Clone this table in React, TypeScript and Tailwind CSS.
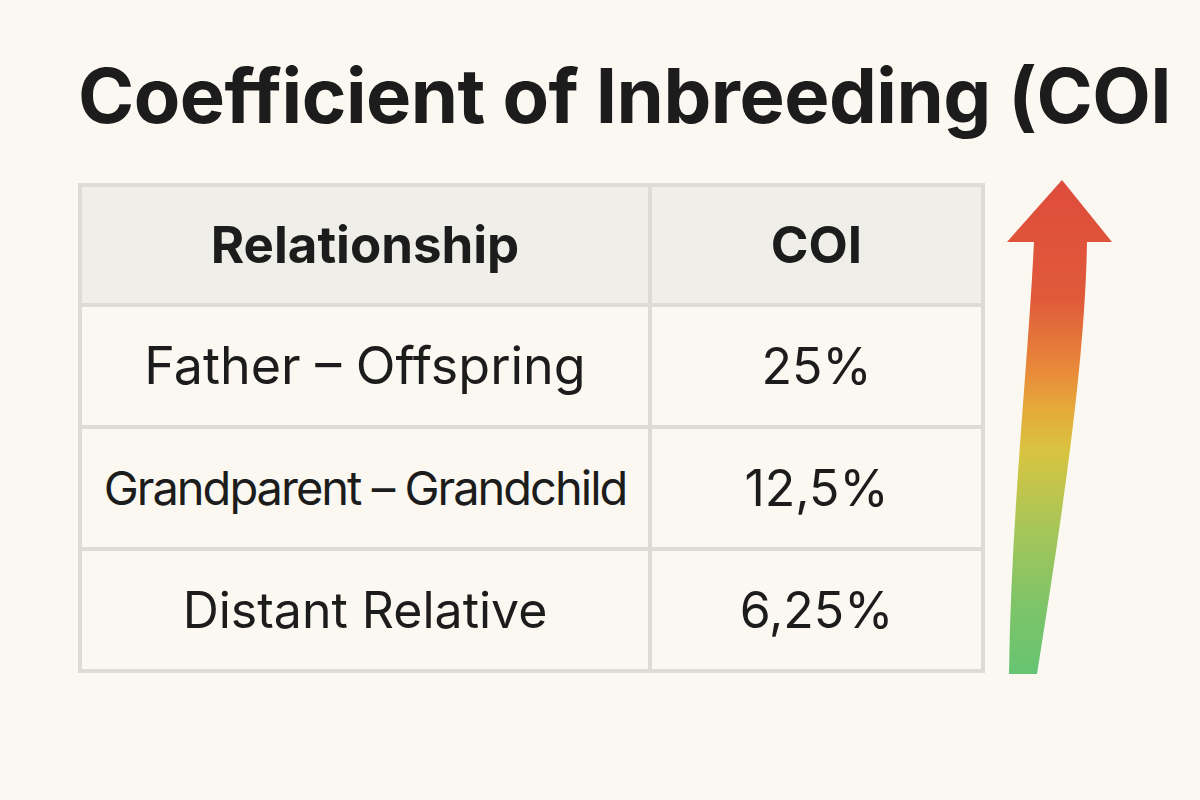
const rows = [
  { rel: "Father – Offspring", coi: "25%", cls: "text-[52px]" },
  { rel: "Grandparent – Grandchild", coi: "12,5%", cls: "text-[47px] tracking-[-2px]" },
  { rel: "Distant Relative", coi: "6,25%", cls: "text-[50px]" },
];

function RiskArrow() {
  return (
    <svg width="120" height="502" viewBox="0 0 120 502" className="shrink-0">
      <defs>
        <linearGradient id="risk" x1="0" y1="0" x2="0" y2="1">
          <stop offset="0" stopColor="#df4c3c" />
          <stop offset="0.24" stopColor="#e05a3a" />
          <stop offset="0.38" stopColor="#e8883a" />
          <stop offset="0.46" stopColor="#e6a83a" />
          <stop offset="0.55" stopColor="#d8c440" />
          <stop offset="0.7" stopColor="#a8c658" />
          <stop offset="0.86" stopColor="#7ec468" />
          <stop offset="1" stopColor="#66c472" />
        </linearGradient>
      </defs>
      <path
        d="M62 4 L112 66 L87 66 C85 190 62 340 37 498 L9 498 C11 340 28 190 34 66 L7 66 Z"
        fill="url(#risk)"
      />
    </svg>
  );
}

export default function App() {
  return (
    <div
      className="w-[1200px] h-[800px] bg-[#faf8f1] text-[#1c1c1c] pl-[78px] pt-[57px]"
      style={{ fontFamily: "Inter, 'Noto Sans', sans-serif" }}
    >
      <h1 className="text-[76px] leading-none font-bold tracking-[-0.5px] whitespace-nowrap">
        Coefficient of Inbreeding (COI
      </h1>

      <div className="mt-[50px] flex items-start gap-[15px]">
        <div className="w-[907px] grid grid-cols-[566px_1fr] gap-[4px] p-[4px] bg-[#dddbd4]">
          <div className="h-[116px] bg-[#f0eee8] flex items-center justify-center text-[51px] font-bold">
            Relationship
          </div>
          <div className="h-[116px] bg-[#f0eee8] flex items-center justify-center text-[51px] font-bold">
            COI
          </div>
          {rows.map((r) => (
            <div key={r.rel} className="contents">
              <div className={`h-[118px] bg-[#faf8f1] flex items-center justify-center whitespace-nowrap ${r.cls}`}>
                {r.rel}
              </div>
              <div className="h-[118px] bg-[#faf8f1] flex items-center justify-center text-[50px]">
                {r.coi}
              </div>
            </div>
          ))}
        </div>
        <div className="-mt-[7px]">
          <RiskArrow />
        </div>
      </div>
    </div>
  );
}
